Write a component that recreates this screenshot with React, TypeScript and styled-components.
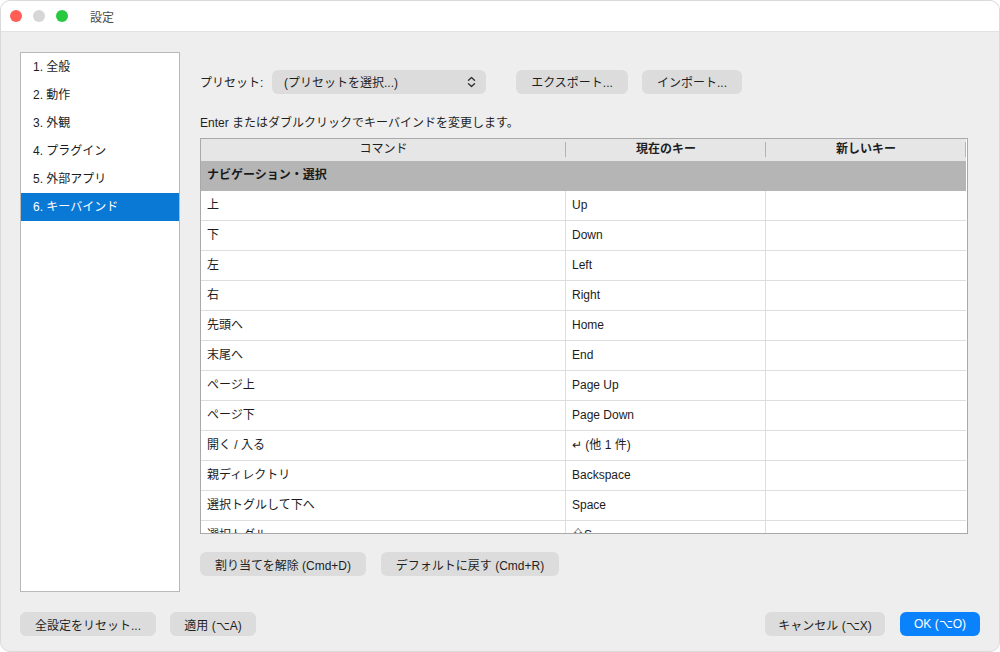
import React, { useState } from 'react';
import styled, { createGlobalStyle } from 'styled-components';

const FONT = `"Liberation Sans", "Noto Sans CJK JP", sans-serif`;

const categories = ['1. 全般', '2. 動作', '3. 外観', '4. プラグイン', '5. 外部アプリ', '6. キーバインド'];

const bindings: [string, string][] = [
  ['上', 'Up'],
  ['下', 'Down'],
  ['左', 'Left'],
  ['右', 'Right'],
  ['先頭へ', 'Home'],
  ['末尾へ', 'End'],
  ['ページ上', 'Page Up'],
  ['ページ下', 'Page Down'],
  ['開く / 入る', '↵ (他 1 件)'],
  ['親ディレクトリ', 'Backspace'],
  ['選択トグルして下へ', 'Space'],
  ['選択トグル', '⇧S'],
];

const GlobalStyle = createGlobalStyle`
  html, body {
    margin: 0;
    padding: 0;
    background: #ffffff;
  }
  body {
    font-family: ${FONT};
    font-size: 12px;
    color: #1f1f1f;
  }
`;

const Window = styled.div`
  width: 1000px;
  height: 652px;
  display: flex;
  flex-direction: column;
  background: #eeeeee;
  border-radius: 10px;
  overflow: hidden;
  box-sizing: border-box;
  border: 1px solid #dadada;
`;

const TitleBar = styled.div`
  height: 30px;
  flex: 0 0 auto;
  display: flex;
  align-items: center;
  padding-left: 9px;
  background: #ffffff;
  border-bottom: 1px solid #e2e2e2;
`;

const Light = styled.span<{ $color: string }>`
  width: 12px;
  height: 12px;
  border-radius: 50%;
  margin-right: 11px;
  background: ${(p) => p.$color};
`;

const Title = styled.span`
  margin-left: 11px;
  color: #4c4c4c;
  font-size: 12px;
`;

const Body = styled.div`
  flex: 1;
  display: flex;
  flex-direction: column;
  padding: 20px 19px 0 19px;
`;

const MainRow = styled.div`
  display: flex;
  gap: 20px;
`;

const Sidebar = styled.div`
  width: 158px;
  height: 538px;
  background: #ffffff;
  border: 1px solid #b9b9b9;
`;

const SideItem = styled.div<{ $active?: boolean }>`
  height: 28px;
  line-height: 28px;
  padding-left: 12px;
  font-size: 12px;
  background: ${(p) => (p.$active ? '#0a79d6' : 'transparent')};
  color: ${(p) => (p.$active ? '#ffffff' : '#1c1c1c')};
  cursor: default;
`;

const Content = styled.div`
  flex: 1;
  display: flex;
  flex-direction: column;
  padding-top: 17px;
`;

const PresetRow = styled.div`
  display: flex;
  align-items: center;
  height: 25px;
`;

const Label = styled.span`
  width: 72px;
  color: #222;
`;

const Combo = styled.div`
  width: 214px;
  height: 24px;
  box-sizing: border-box;
  border-radius: 6px;
  background: #dcdcdc;
  display: flex;
  align-items: center;
  justify-content: space-between;
  padding: 0 10px 0 12px;
  color: #1f1f1f;
`;

const Button = styled.button<{ $width: number; $primary?: boolean }>`
  width: ${(p) => p.$width}px;
  height: 24px;
  border: none;
  border-radius: 6px;
  background: ${(p) => (p.$primary ? '#0a82fb' : '#dcdcdc')};
  color: ${(p) => (p.$primary ? '#ffffff' : '#1f1f1f')};
  font-family: ${FONT};
  font-size: 12px;
  padding: 0;
  flex: 0 0 auto;
`;

const ButtonGroup = styled.div<{ $gap: number; $ml?: number }>`
  display: flex;
  gap: ${(p) => p.$gap}px;
  margin-left: ${(p) => p.$ml ?? 0}px;
`;

const Hint = styled.div`
  margin-top: 22px;
  margin-bottom: 8px;
  line-height: 14px;
  color: #1f1f1f;
`;

const Table = styled.div`
  width: 768px;
  height: 396px;
  box-sizing: border-box;
  border: 1px solid #a9a9a9;
  background: #ffffff;
  overflow: hidden;
`;

const Grid = styled.div`
  display: grid;
  grid-template-columns: 365px 200px 200px;
`;

const HeadCell = styled.div<{ $bold?: boolean }>`
  height: 22px;
  line-height: 20px;
  text-align: center;
  background: #e6e6e6;
  font-weight: ${(p) => (p.$bold ? 700 : 400)};
  position: relative;
  &::after {
    content: '';
    position: absolute;
    right: 0;
    top: 3px;
    bottom: 4px;
    width: 1px;
    background: #b2b2b2;
  }
`;

const GroupRow = styled.div`
  grid-column: 1 / span 3;
  height: 30px;
  line-height: 28px;
  background: #b5b5b5;
  padding-left: 6px;
  font-weight: 700;
  color: #1a1a1a;
`;

const Cell = styled.div<{ $last?: boolean }>`
  height: 30px;
  line-height: 28px;
  box-sizing: border-box;
  padding-left: 6px;
  border-bottom: 1px solid #dedede;
  border-right: ${(p) => (p.$last ? 'none' : '1px solid #dedede')};
  white-space: nowrap;
  overflow: hidden;
  color: #1c1c1c;
`;

const ActionRow = styled.div`
  display: flex;
  gap: 15px;
  margin-top: 18px;
`;

const Footer = styled.div`
  display: flex;
  justify-content: space-between;
  margin-top: 20px;
`;

const Chevrons = () => (
  <svg width="9" height="12" viewBox="0 0 9 12" fill="none" stroke="#333" strokeWidth="1.4" strokeLinecap="round" strokeLinejoin="round">
    <path d="M1.5 4.2 L4.5 1.5 L7.5 4.2" />
    <path d="M1.5 7.8 L4.5 10.5 L7.5 7.8" />
  </svg>
);

const App: React.FC = () => {
  const [active, setActive] = useState<number>(5);

  return (
    <>
      <GlobalStyle />
      <Window>
        <TitleBar>
          <Light $color="#ff5f57" />
          <Light $color="#d6d6d6" />
          <Light $color="#28c840" />
          <Title>設定</Title>
        </TitleBar>
        <Body>
          <MainRow>
            <Sidebar>
              {categories.map((c, i) => (
                <SideItem key={c} $active={i === active} onClick={() => setActive(i)}>
                  {c}
                </SideItem>
              ))}
            </Sidebar>
            <Content>
              <PresetRow>
                <Label>プリセット:</Label>
                <Combo>
                  <span>(プリセットを選択...)</span>
                  <Chevrons />
                </Combo>
                <ButtonGroup $gap={14} $ml={30}>
                  <Button $width={112}>エクスポート...</Button>
                  <Button $width={100}>インポート...</Button>
                </ButtonGroup>
              </PresetRow>
              <Hint>Enter またはダブルクリックでキーバインドを変更します。</Hint>
              <Table>
                <Grid>
                  <HeadCell>コマンド</HeadCell>
                  <HeadCell $bold>現在のキー</HeadCell>
                  <HeadCell $bold>新しいキー</HeadCell>
                  <GroupRow>ナビゲーション・選択</GroupRow>
                  {bindings.map(([cmd, key]) => (
                    <React.Fragment key={cmd + key}>
                      <Cell>{cmd}</Cell>
                      <Cell>{key}</Cell>
                      <Cell $last />
                    </React.Fragment>
                  ))}
                </Grid>
              </Table>
              <ActionRow>
                <Button $width={166}>割り当てを解除 (Cmd+D)</Button>
                <Button $width={178}>デフォルトに戻す (Cmd+R)</Button>
              </ActionRow>
            </Content>
          </MainRow>
          <Footer>
            <ButtonGroup $gap={14}>
              <Button $width={136}>全設定をリセット...</Button>
              <Button $width={86}>適用 (⌥A)</Button>
            </ButtonGroup>
            <ButtonGroup $gap={15}>
              <Button $width={120}>キャンセル (⌥X)</Button>
              <Button $width={80} $primary>OK (⌥O)</Button>
            </ButtonGroup>
          </Footer>
        </Body>
      </Window>
    </>
  );
};

export default App;
